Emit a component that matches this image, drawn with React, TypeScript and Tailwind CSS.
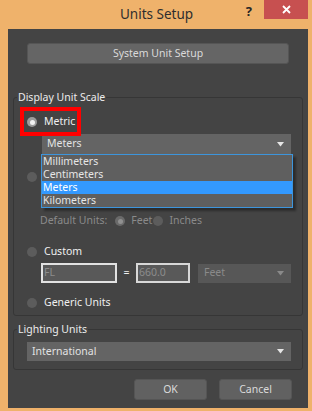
import React from 'react';

function Arrow({ color = '#e0e0e0' }: { color?: string }) {
  return (
    <svg width="7" height="5" viewBox="0 0 7 5">
      <polygon points="0,0 7,0 3.5,4.5" fill={color} />
    </svg>
  );
}

function Dropdown({ label, className, dim }: { label: string; className: string; dim?: boolean }) {
  return (
    <div
      className={`flex items-center justify-between pl-[5px] pr-[7px] ${className} ${
        dim ? 'bg-[#575757] text-[#8a8a8a]' : 'bg-[#646464] text-[#e2e2e2]'
      }`}
    >
      <span>{label}</span>
      <Arrow color={dim ? '#8a8a8a' : '#e6e6e6'} />
    </div>
  );
}

function Radio({ checked, dim }: { checked?: boolean; dim?: boolean }) {
  if (checked) {
    return (
      <span
        className={`flex h-[10px] w-[10px] shrink-0 items-center justify-center rounded-full ${
          dim ? 'bg-[#6a6a6a]' : 'bg-[#9c9c9c]'
        }`}
      >
        <span className={`h-[5px] w-[5px] rounded-full ${dim ? 'bg-[#909090]' : 'bg-[#f2f2f2]'}`} />
      </span>
    );
  }
  return <span className="block h-[10px] w-[10px] shrink-0 rounded-full bg-[#5c5c5c]" />;
}

function Group({ title, className, children }: { title: string; className: string; children: React.ReactNode }) {
  return (
    <fieldset className={`mx-[5px] rounded-[3px] border border-[#363636] ${className}`}>
      <legend className="ml-[3px] h-[14px] px-[1px] leading-[14px] text-[#ececec]">{title}</legend>
      {children}
    </fieldset>
  );
}

export default function App() {
  return (
    <div className="relative flex h-[411px] w-[312px] flex-col bg-[#efb26b] font-['Noto_Sans',sans-serif] text-[10.5px]">
      {/* title bar */}
      <div className="flex h-[29px] items-start">
        <span className="ml-[120px] mt-[5px] text-[13.5px] leading-[18px] text-[#2e2e2e]">Units Setup</span>
        <span className="ml-auto mr-[12px] mt-[3px] text-[13px] font-bold leading-[16px] text-[#262626]">?</span>
        <div className="mr-[4px] flex h-[19px] w-[44px] items-center justify-center bg-[#c75050]">
          <svg width="9" height="9" viewBox="0 0 9 9">
            <path d="M1 1L8 8M8 1L1 8" stroke="#ffffff" strokeWidth="1.8" />
          </svg>
        </div>
      </div>

      {/* dialog body */}
      <div className="ml-[8px] mr-[4px] flex h-[379px] flex-col bg-[#444444]">
        <button className="mx-[19px] mt-[14px] h-[21px] rounded-[3px] border border-[#555555] bg-[#656565] text-[#dadada]">
          System Unit Setup
        </button>

        <Group title="Display Unit Scale" className="relative mt-[26px] pb-[4px]">
          <div className="ml-[13px] mt-[10px] flex h-[16px] items-center gap-[7px] text-[#f0f0f0]">
            <Radio checked />
            <span>Metric</span>
          </div>
          <Dropdown label="Meters" className="ml-[28px] mr-[11px] mt-[4px] h-[20px]" />

          {/* US Standard row, hidden under the open list */}
          <div className="ml-[13px] mt-[15px] flex h-[16px] items-center">
            <Radio />
          </div>
          <div className="ml-[28px] mr-[11px] mt-[3px] h-[20px] bg-[#646464]" />

          <div className="ml-[26px] mt-[5px] flex h-[16px] items-center text-[#8a8a8a]">
            <span>Default Units:</span>
            <span className="ml-[8px] mr-[6px] flex">
              <Radio checked dim />
            </span>
            <span>Feet</span>
            <span className="ml-[1px] mr-[6px] flex">
              <Radio />
            </span>
            <span>Inches</span>
          </div>

          <div className="ml-[13px] mt-[15px] flex h-[16px] items-center gap-[7px] text-[#f0f0f0]">
            <Radio />
            <span>Custom</span>
          </div>
          <div className="ml-[27px] mr-[11px] mt-[3px] flex h-[20px] items-center">
            <div className="flex h-[20px] w-[76px] items-center border-2 border-[#e2e2e2] bg-[#595959] pl-[1px] text-[#8c8c8c]">
              FL
            </div>
            <span className="w-[19px] text-center text-[#f0f0f0]">=</span>
            <div className="flex h-[20px] w-[54px] items-center border-2 border-[#d8d8d8] bg-[#595959] pl-[1px] text-[#8c8c8c]">
              660.0
            </div>
            <Dropdown label="Feet" dim className="ml-[8px] h-[19px] flex-1 pl-[6px]" />
          </div>

          <div className="ml-[13px] mt-[12px] flex h-[16px] items-center gap-[7px] text-[#f0f0f0]">
            <Radio />
            <span>Generic Units</span>
          </div>

          {/* open list of the Metric dropdown */}
          <div className="absolute left-[27px] top-[50px] w-[252px] border border-[#3d95dc] bg-[#5f5f5f] leading-[13px] text-[#e6e6e6] shadow-[3px_3px_2px_rgba(0,0,0,0.35)]">
            <div className="h-[13px] pl-[1px]">Millimeters</div>
            <div className="h-[13px] pl-[1px]">Centimeters</div>
            <div className="h-[13px] bg-[#3399ff] pl-[1px] text-white">Meters</div>
            <div className="h-[13px] pl-[1px]">Kilometers</div>
          </div>
        </Group>

        <Group title="Lighting Units" className="mt-[6px] pb-[8px]">
          <Dropdown label="International" className="ml-[13px] mr-[11px] mt-[6px] h-[19px]" />
        </Group>

        <div className="mr-[16px] mt-[9px] flex justify-end gap-[12px]">
          <button className="h-[21px] w-[73px] rounded-[3px] border border-[#555555] bg-[#616161] text-[#dadada]">OK</button>
          <button className="h-[21px] w-[73px] rounded-[3px] border border-[#555555] bg-[#616161] text-[#dadada]">Cancel</button>
        </div>
      </div>

      {/* red highlight annotation */}
      <div className="absolute left-[20px] top-[107px] h-[29px] w-[61px] border-[4px] border-[#ff0000]" />
    </div>
  );
}
